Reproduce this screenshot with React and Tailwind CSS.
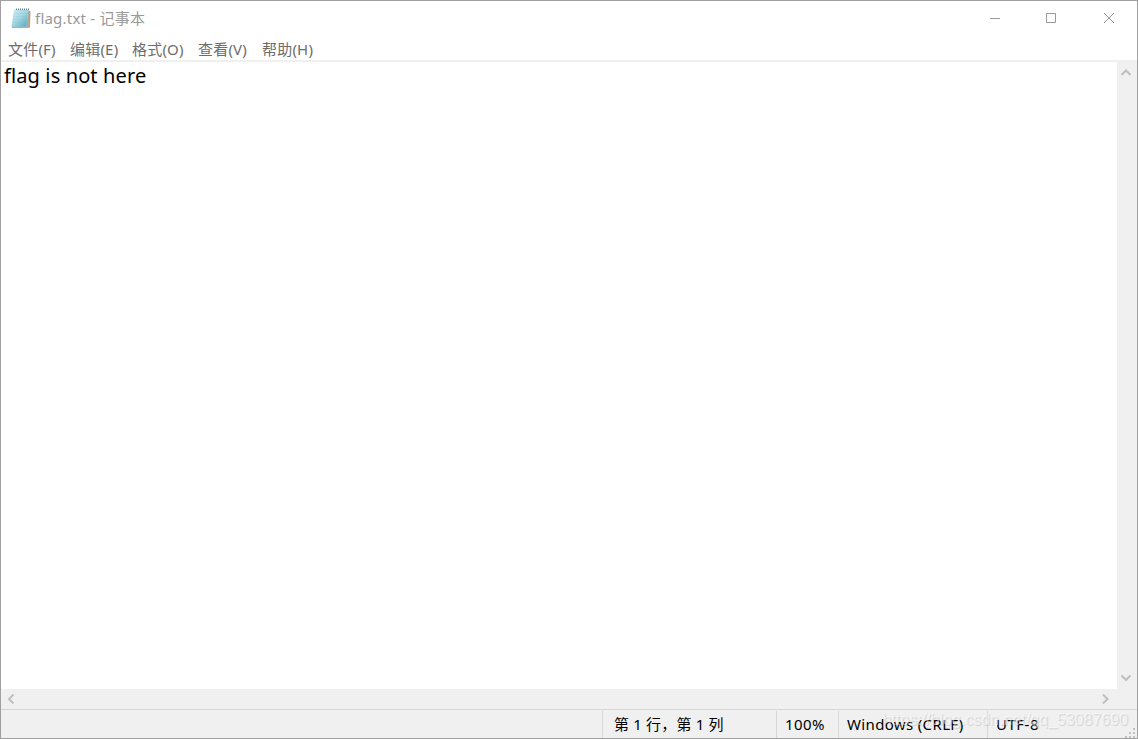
const menus = [
    { name: "文件", hotkey: "(F)", box: "w-[62px]" },
    { name: "编辑", hotkey: "(E)", box: "w-[62px]" },
    { name: "格式", hotkey: "(O)", box: "w-[66px]" },
    { name: "查看", hotkey: "(V)", box: "w-[64px]" },
    { name: "帮助", hotkey: "(H)", box: "w-[66px]" },
];

const NotepadIcon = () => (
    <svg width="20" height="21" viewBox="0 0 20 21">
        <defs>
            <linearGradient id="page" x1="0" y1="0" x2="1" y2="1">
                <stop offset="0" stopColor="#d3eff5" />
                <stop offset="0.5" stopColor="#9ed4e2" />
                <stop offset="1" stopColor="#4fa3ba" />
            </linearGradient>
        </defs>
        <path d="M17 2.5L19.5 3L19 19.5L15 19.5Z" fill="#b5a48c" />
        <path d="M3.5 2H17.5L15.5 19H0.7Z" fill="url(#page)" stroke="#a3cdd8" strokeWidth="0.5" />
        <path d="M4 5.5H17M3.5 8.5H16.5M3 11.5H16M2.5 14.5H15.5" stroke="#70b2c4" strokeWidth="0.5" opacity="0.3" />
        <path d="M1 19.5H18" stroke="#b7ae9f" />
        <path d="M5 1.2H18" stroke="#6e7c80" strokeWidth="1.4" strokeDasharray="1 1" />
    </svg>
);

const Arrow = ({ d }) => (
    <svg width="10" height="10" viewBox="0 0 10 10" fill="none" stroke="#bfbfbf" strokeWidth="2">
        <path d={d} />
    </svg>
);

const TitleBar = () => (
    <header className="flex h-[34px] shrink-0 items-start text-[#999999]">
        <div className="pl-[10px] pt-[7px]">
            <NotepadIcon />
        </div>
        <h1 className="ml-1 mt-[7px] whitespace-nowrap text-[15px] leading-5 tracking-[0.22px]">flag.txt - 记事本</h1>
        <div className="ml-auto flex">
            <button className="flex h-[34px] w-[56px] items-center justify-center">
                <svg width="10" height="10" stroke="currentColor" fill="none"><path d="M0 5.5H10" /></svg>
            </button>
            <button className="flex h-[34px] w-[56px] items-center justify-center">
                <svg width="10" height="10" stroke="currentColor" fill="none"><path d="M0.5 0.5H9.5V9.5H0.5Z" /></svg>
            </button>
            <button className="flex h-[34px] w-[58px] items-center justify-center pl-[2px]">
                <svg width="10" height="10" stroke="currentColor" fill="none"><path d="M0 0L10 10M10 0L0 10" /></svg>
            </button>
        </div>
    </header>
);

export default function App() {
    return (
        <div className="relative flex h-[739px] w-[1138px] flex-col overflow-hidden border border-[#a0a0a0] bg-white font-['Noto_Sans','Noto_Sans_CJK_SC',sans-serif]">
            <TitleBar />

            <nav className="flex h-[25px] shrink-0 items-center pl-[7px] pt-[3px] text-[15px] leading-5 tracking-[0.2px] text-[#6d6d6d]">
                {menus.map((menu) => (
                    <button key={menu.name} className={`${menu.box} whitespace-nowrap text-left`}>
                        {menu.name}{menu.hotkey}
                    </button>
                ))}
            </nav>

            <main className="flex h-[629px] shrink-0 border-t-2 border-[#f0f0f0]">
                <div className="flex-1 pl-[3px] text-[20px] leading-[28px] tracking-[0.12px] text-black">flag is not here</div>
                <div className="flex w-5 flex-col items-start justify-between bg-[#f0f0f0] pb-[6px] pl-[4px] pt-[5px]">
                    <Arrow d="M0.5 8L5 3.5L9.5 8" />
                    <Arrow d="M0.5 2.5L5 7L9.5 2.5" />
                </div>
            </main>

            <div className="flex h-5 shrink-0 items-center justify-between bg-[#f0f0f0] pl-[5px] pr-[26px]">
                <Arrow d="M7.5 0.5L3 5L7.5 9.5" />
                <Arrow d="M2 0.5L6.5 5L2 9.5" />
            </div>

            <footer className="flex flex-1 border-t border-[#d7d7d7] bg-[#f0f0f0] pt-px text-[15px] leading-[27px] text-black">
                <div className="w-[601px]" />
                <div className="w-[174px] whitespace-pre border-l border-[#d7d7d7] pl-[11px] tracking-[0.17px]">第 1 行，第 1 列</div>
                <div className="w-[62px] border-l border-[#d7d7d7] pl-2 tracking-[0.4px]">100%</div>
                <div className="w-[149px] whitespace-nowrap border-l border-[#d7d7d7] pl-2 tracking-[0.35px]">Windows (CRLF)</div>
                <div className="flex-1 border-l border-[#d7d7d7] pl-2 tracking-[0.5px]">UTF-8</div>
                <svg className="self-end" width="12" height="10" fill="#bfbfbf">
                    <path d="M8 0h2v2h-2zM4 4h2v2H4zM8 4h2v2H8zM0 8h2v2H0zM4 8h2v2H4zM8 8h2v2H8z" />
                </svg>
            </footer>

            <div className="absolute bottom-[8px] right-[9px] whitespace-nowrap font-['Liberation_Sans',sans-serif] text-[16px] leading-5 text-white/50 [text-shadow:1px_1px_1px_rgba(0,0,0,0.13)]">
                https://blog.csdn.net/qq_53087690
            </div>
        </div>
    );
}
